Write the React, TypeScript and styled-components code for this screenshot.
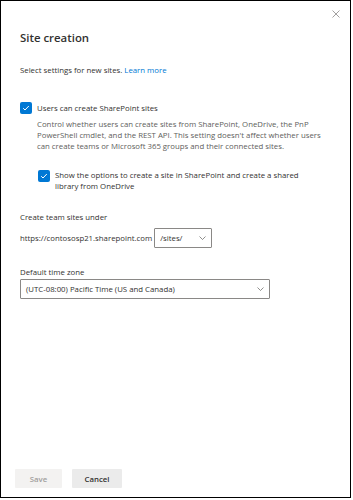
import React from 'react';
import styled, { createGlobalStyle } from 'styled-components';

const colors = {
  text: '#323130',
  subtle: '#605e5c',
  blue: '#0078d4',
  border: '#8a8886',
  buttonBg: '#f3f2f1',
  disabled: '#a19f9d',
};

const GlobalStyle = createGlobalStyle`
  html, body {
    margin: 0;
    padding: 0;
    background: #fff;
  }
  body {
    font-family: "Open Sans", "Liberation Sans", sans-serif;
    color: ${colors.text};
  }
`;

const Frame = styled.div`
  box-sizing: border-box;
  width: 351px;
  height: 498px;
  border: 1px solid #000;
  display: flex;
  flex-direction: column;
  background: #fff;
`;

const TopBar = styled.div`
  display: flex;
  justify-content: flex-end;
  padding: 9px 10px 0 0;
`;

const CloseButton = styled.button`
  width: 8px;
  height: 8px;
  padding: 0;
  border: none;
  background: none;
  display: flex;
  cursor: pointer;
`;

const Body = styled.div`
  padding: 0 19px;
  display: flex;
  flex-direction: column;
`;

const Title = styled.h1`
  margin: 13px 0 0;
  font-size: 11.4px;
  line-height: 14px;
  font-weight: 600;
  color: ${colors.text};
`;

const Intro = styled.p`
  margin: 20px 0 0;
  font-size: 7.8px;
  line-height: 10px;
  color: ${colors.text};
`;

const LearnMore = styled.a`
  color: ${colors.blue};
  text-decoration: none;
`;

const CheckRow = styled.label<{ $indent?: number; $top: number }>`
  display: flex;
  align-items: flex-start;
  gap: 5px;
  margin-top: ${p => p.$top}px;
  padding-left: ${p => p.$indent || 0}px;
  cursor: pointer;
`;

const Box = styled.span`
  flex: 0 0 12px;
  width: 12px;
  height: 12px;
  border-radius: 2px;
  background: ${colors.blue};
  display: flex;
  align-items: center;
  justify-content: center;
`;

const CheckLabel = styled.span<{ $lh: number }>`
  max-width: 250px;
  font-size: 7.8px;
  line-height: ${p => p.$lh}px;
  color: ${colors.text};
`;

const Description = styled.p`
  margin: 4.5px 0 0;
  padding-left: 17px;
  max-width: 288px;
  font-size: 7.8px;
  line-height: 11.2px;
  color: ${colors.subtle};
`;

const FieldLabel = styled.div<{ $top: number }>`
  margin-top: ${p => p.$top}px;
  font-size: 7.8px;
  line-height: 10px;
  color: ${colors.text};
`;

const UrlRow = styled.div`
  display: flex;
  align-items: center;
  gap: 2px;
  margin-top: 6.3px;
  font-size: 7.8px;
  color: ${colors.text};
`;

const Dropdown = styled.div<{ $width: number; $top?: number }>`
  box-sizing: border-box;
  width: ${p => p.$width}px;
  height: 20px;
  margin-top: ${p => p.$top || 0}px;
  border: 1px solid ${colors.border};
  border-radius: 1px;
  display: flex;
  align-items: center;
  justify-content: space-between;
  padding: 0 5px 0 5px;
  font-size: 7.8px;
  color: ${colors.text};
`;

const Footer = styled.div`
  margin-top: auto;
  display: flex;
  gap: 10px;
  padding: 0 0 9px 14px;
`;

const Button = styled.button<{ $disabled?: boolean; $width: number }>`
  width: ${p => p.$width}px;
  height: 19px;
  padding: 0;
  border: none;
  border-radius: 1px;
  background: ${p => (p.$disabled ? colors.buttonBg : '#ebebeb')};
  color: ${p => (p.$disabled ? colors.disabled : colors.text)};
  font-family: "Open Sans", "Liberation Sans", sans-serif;
  font-size: 7.8px;
  font-weight: 600;
`;

const Check = () => (
  <svg width="8" height="8" viewBox="0 0 8 8">
    <path d="M1.2 4.2 L3 6 L6.8 2" fill="none" stroke="#fff" strokeWidth="1" />
  </svg>
);

const Chevron = () => (
  <svg width="7" height="4" viewBox="0 0 7 4">
    <path d="M0.5 0.5 L3.5 3.5 L6.5 0.5" fill="none" stroke={colors.subtle} strokeWidth="0.7" />
  </svg>
);

export default function App() {
  return (
    <>
      <GlobalStyle />
      <Frame>
        <TopBar>
          <CloseButton aria-label="Close">
            <svg width="8" height="8" viewBox="0 0 8 8">
              <path d="M0.5 0.5 L7.5 7.5 M7.5 0.5 L0.5 7.5" stroke="#8a8886" strokeWidth="0.8" />
            </svg>
          </CloseButton>
        </TopBar>
        <Body>
          <Title>Site creation</Title>
          <Intro>
            Select settings for new sites. <LearnMore href="#">Learn more</LearnMore>
          </Intro>
          <CheckRow $top={27}>
            <Box><Check /></Box>
            <CheckLabel $lh={12}>Users can create SharePoint sites</CheckLabel>
          </CheckRow>
          <Description>
            Control whether users can create sites from SharePoint, OneDrive, the PnP PowerShell cmdlet, and the
            REST API. This setting doesn't affect whether users can create teams or Microsoft 365 groups and their
            connected sites.
          </Description>
          <CheckRow $top={18} $indent={18}>
            <Box><Check /></Box>
            <CheckLabel $lh={10.6}>
              Show the options to create a site in SharePoint and create a shared library from OneDrive
            </CheckLabel>
          </CheckRow>
          <FieldLabel $top={20.5}>Create team sites under</FieldLabel>
          <UrlRow>
            <span>https://contososp21.sharepoint.com</span>
            <Dropdown $width={58}>
              <span>/sites/</span>
              <Chevron />
            </Dropdown>
          </UrlRow>
          <FieldLabel $top={18.7}>Default time zone</FieldLabel>
          <Dropdown $width={250} $top={2.3}>
            <span>(UTC-08:00) Pacific Time (US and Canada)</span>
            <Chevron />
          </Dropdown>
        </Body>
        <Footer>
          <Button $disabled $width={47}>Save</Button>
          <Button $width={50}>Cancel</Button>
        </Footer>
      </Frame>
    </>
  );
}
